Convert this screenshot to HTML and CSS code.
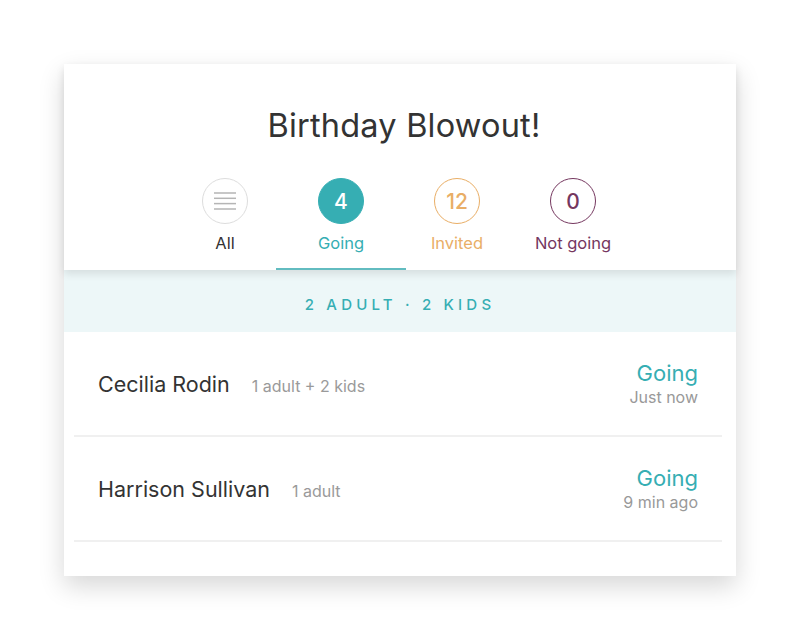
FILE: index.html
```
<!DOCTYPE html>
<html>
<head>
<meta charset="utf-8">
<link rel="stylesheet" href="styles.css">
</head>
<body>
<div class="card">
  <div class="header">
    <h1 class="title">Birthday Blowout!</h1>
    <div class="tabs">
      <div class="tab tab-all">
        <div class="circle">
          <svg width="22" height="18" viewBox="0 0 22 18"><g stroke="#b5b5b5" stroke-width="1.5"><line x1="0" y1="1" x2="22" y2="1"/><line x1="0" y1="6.3" x2="22" y2="6.3"/><line x1="0" y1="11.6" x2="22" y2="11.6"/><line x1="0" y1="17" x2="22" y2="17"/></g></svg>
        </div>
        <div class="label">All</div>
      </div>
      <div class="tab tab-going active">
        <div class="circle">4</div>
        <div class="label">Going</div>
      </div>
      <div class="tab tab-invited">
        <div class="circle">12</div>
        <div class="label">Invited</div>
      </div>
      <div class="tab tab-not">
        <div class="circle">0</div>
        <div class="label">Not going</div>
      </div>
    </div>
  </div>
  <div class="band">2 ADULT · 2 KIDS</div>
  <div class="list">
    <div class="row">
      <div class="who"><span class="name">Cecilia Rodin</span><span class="party">1 adult + 2 kids</span></div>
      <div class="status"><div class="state">Going</div><div class="time">Just now</div></div>
    </div>
    <div class="row">
      <div class="who"><span class="name">Harrison Sullivan</span><span class="party">1 adult</span></div>
      <div class="status"><div class="state">Going</div><div class="time">9 min ago</div></div>
    </div>
  </div>
</div>
</body>
</html>
```
FILE: styles.css
```
html, body { margin: 0; padding: 0; background: #fff; }
body { width: 800px; height: 640px; font-family: "Inter", "Liberation Sans", sans-serif; padding-top: 64px; box-sizing: border-box; }
.card {
  width: 672px; height: 512px; margin: 0 auto 0 64px;
  background: #fff;
  box-shadow: 0 10px 24px rgba(0,0,0,0.16);
  display: flex; flex-direction: column;
}
.header {
  height: 206px; background: #fff; position: relative; z-index: 1;
  box-shadow: 0 4px 8px rgba(0,0,0,0.10);
  display: flex; flex-direction: column; align-items: center;
}
.title {
  margin: 42px 0 0 8px; font-weight: 400; font-size: 32.5px; color: #333;
  letter-spacing: 0.2px; line-height: 40px;
}
.tabs { display: flex; margin-top: 32px; margin-left: -2px; height: 92px; flex: 1; }
.tab { width: 116px; display: flex; flex-direction: column; align-items: center; position: relative; }
.circle {
  width: 44px; height: 44px; border-radius: 50%; border: 1px solid #ddd;
  display: flex; align-items: center; justify-content: center;
  font-size: 21px; font-weight: 500; box-sizing: content-box;
}
.label { margin-top: 9px; font-size: 16.5px; line-height: 20px; }
.tab-all .label { color: #333; }
.tab-going .circle { background: #36aeb3; border-color: #36aeb3; color: #fff; }
.tab-going .label { color: #36aeb3; }
.tab-invited .circle { border-color: #e9ae66; color: #e9ae66; }
.tab-invited .label { color: #e9ae66; }
.tab-not .circle { border-color: #75375f; color: #75375f; }
.tab-not .label { color: #75375f; }
.active::after {
  content: ""; position: absolute; left: -7px; right: -7px; bottom: 0; height: 2px; background: #62bcc0;
}
.band {
  height: 62px; background: #edf7f8; display: flex; align-items: center; justify-content: center;
  color: #36aeb3; font-size: 15px; letter-spacing: 4.2px; font-weight: 500; padding-top: 7px; box-sizing: border-box;
}
.list { padding: 0 14px 0 10px; }
.row {
  height: 103px; border-bottom: 2px solid #f0f0f0; display: flex; align-items: center; justify-content: space-between;
  padding: 0 24px;
}
.who { display: flex; align-items: baseline; margin-top: 1px; }
.name { font-size: 21.5px; color: #333; }
.party { font-size: 16px; color: #9a9a9a; margin-left: 22px; }
.status { text-align: right; }
.state { font-size: 22px; color: #36aeb3; line-height: 26px; }
.time { font-size: 16px; color: #999; line-height: 20px; margin-top: 1px; }
```
